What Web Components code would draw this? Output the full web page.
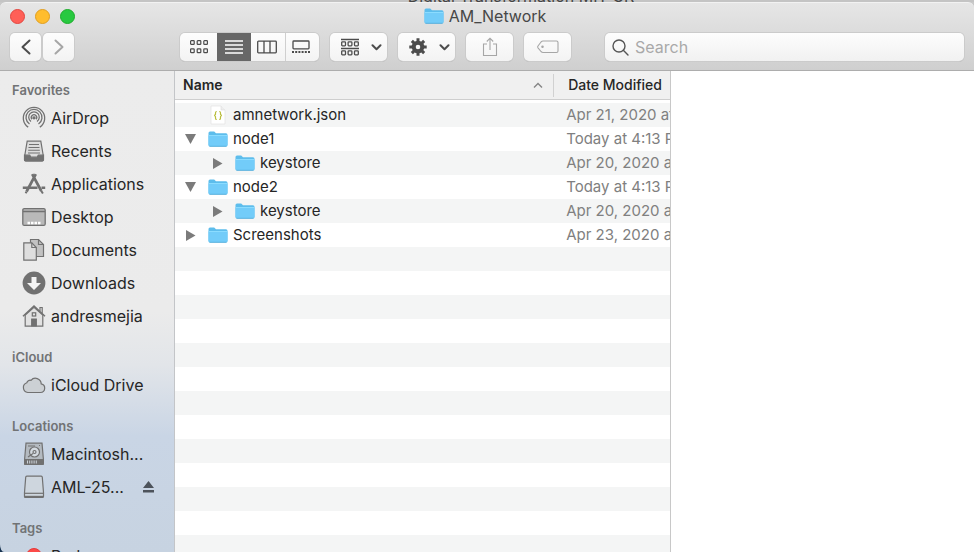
<!DOCTYPE html>
<html lang="en">
<head>
<meta charset="utf-8">
<title>AM_Network</title>
<style>
html,body{margin:0;height:100%}
body{font-family:Inter,"Liberation Sans",sans-serif;font-size:16px;color:#262626;overflow:hidden;background:#c9c9c9}
</style>
</head>
<body>
<finder-window></finder-window>
<script>
const FOLDER = `<svg width="20" height="16" viewBox="0 0 20 16"><path d="M.5 2Q.5.5 2 .5h4.200l1.800 1.700H18q1.500 0 1.500 1.500V14q0 1.500-1.500 1.500H2Q.5 15.500.5 14z" fill="#5dbdec"/><path d="M.5 4.500h19V13.500q0 1.500-1.500 1.500H2Q.5 15 .5 13.500z" fill="#72ccf9"/><path d="M1 4.500h18" stroke="#8bdcff"/><path d="M1.500 15.300h17" stroke="#4fabd9" stroke-width=".8"/></svg>`;
const S = (w,h,body,extra='') => `<svg width="${w}" height="${h}" viewBox="0 0 ${w} ${h}" fill="none" stroke="currentColor" ${extra}>${body}</svg>`;
const ICONS = {
  folder: FOLDER,
  back: S(12,16,'<path d="M9.500 1.500 2.500 8l7 6.500"/>','stroke-width="2" stroke-linecap="round" stroke-linejoin="round"'),
  forward: S(12,16,'<path d="m2.500 1.500 7 6.500-7 6.500"/>','stroke-width="2" stroke-linecap="round" stroke-linejoin="round"'),
  chevron: S(11,7,'<path d="M1.500 1.200 5.500 5.200l4-4"/>','stroke-width="2" stroke-linecap="round" stroke-linejoin="round"'),
  grid: S(18,14,'<rect x=".6" y=".6" width="3.600" height="3.800" rx=".7"/><rect x="7.200" y=".6" width="3.600" height="3.800" rx=".7"/><rect x="13.800" y=".6" width="3.600" height="3.800" rx=".7"/><rect x=".6" y="8.800" width="3.600" height="3.800" rx=".7"/><rect x="7.200" y="8.800" width="3.600" height="3.800" rx=".7"/><rect x="13.800" y="8.800" width="3.600" height="3.800" rx=".7"/>','stroke-width="1.200"'),
  list: S(18,14,'<path d="M0 1h18M0 5h18M0 9h18M0 13h18"/>','stroke-width="1.300"'),
  columns: S(20,14,'<rect x=".7" y="1.200" width="18.600" height="11.600" rx=".8"/><path d="M7 1v12M13 1v12"/>','stroke-width="1.300"'),
  gallery: S(18,14,'<rect x="1" y="1" width="16" height="7.800" rx=".8"/><path d="M0 12h18" stroke-width="2" stroke-dasharray="2 1.200"/>','stroke-width="1.300"'),
  group: S(18,18,'<path d="M0 1.500h18M0 10.500h18"/><rect x=".7" y="3.900" width="3.800" height="3.900" rx=".7"/><rect x="7.100" y="3.900" width="3.800" height="3.900" rx=".7"/><rect x="13.500" y="3.900" width="3.800" height="3.900" rx=".7"/><rect x=".7" y="12.900" width="3.800" height="3.900" rx=".7"/><rect x="7.100" y="12.900" width="3.800" height="3.900" rx=".7"/><rect x="13.500" y="12.900" width="3.800" height="3.900" rx=".7"/>','stroke-width="1.300"'),
  gear: S(18,18,'<circle cx="9" cy="9" r="4.300" stroke-width="4"/><g stroke-width="3"><path d="M9 .3v3.500M9 14.200v3.500M.3 9h3.500M14.200 9h3.500M2.850 2.850l2.500 2.500M12.650 12.650l2.500 2.500M2.850 15.150l2.500-2.500M12.650 5.350l2.500-2.500"/></g>'),
  share: S(16,20,'<path d="M5 7H1.500v11.500h13V7H11M8 13V1.500M4.800 4.500 8 1.200l3.200 3.300"/>','stroke-width="1.100"'),
  tag: S(22,14,'<path d="M6 1h13.500q1.500 0 1.500 1.500v8.500q0 1.500-1.500 1.500H6Q5 12.500 4 11.500L1 7.800q-.6-.9 0-1.800L4 2Q5 1 6 1z"/><circle cx="5.500" cy="6.800" r=".7" fill="currentColor"/>','stroke-width="1.100"'),
  search: S(17,17,'<circle cx="7" cy="7" r="6"/><path d="m11.300 11.300 4.700 4.700"/>','stroke-width="1.400" stroke-linecap="round"'),
  sort: S(10,7,'<path d="m1 5.500 4-4 4 4"/>','stroke-width="1.400"'),
  down: `<svg width="11" height="10" viewBox="0 0 11 10"><path d="M0 0h11L5.500 10z" fill="#7b7b7b"/></svg>`,
  right: `<svg width="11" height="11" viewBox="0 0 11 11"><path d="M1 0v11l9.500-5.500z" fill="#7b7b7b"/></svg>`,
  json: `<svg width="20" height="20" viewBox="0 0 20 20"><path d="M3 1h10l4 4v14H3z" fill="#fff" stroke="#e2e2e2" stroke-width=".7"/><path d="M13 1v4h4" fill="#eee" stroke="#ddd" stroke-width=".6"/><path d="M8.800 6.500q-1.300 0-1.300 1.200v1.500L6.600 10.500l.9 1.200v1.500q0 1.300 1.300 1.300M11.200 6.500q1.300 0 1.300 1.200v1.500l.9 1.300-.9 1.200v1.500q0 1.300-1.300 1.300" fill="none" stroke="#b9bd3c" stroke-width="1.200"/></svg>`,
  eject: `<svg width="11" height="12" viewBox="0 0 11 12"><path d="M5.500 0 11 7H0zM0 9h11v2.600H0z" fill="currentColor"/></svg>`,
  airdrop: S(24,24,'<path d="M6.200 21.100a10.700 10.700 0 1 1 11.600 0M7.500 18a8 8 0 1 1 9 0M9 15.500a5.300 5.300 0 1 1 6 0"/><path d="M10 13.300a2.700 2.700 0 1 1 4 0"/><circle cx="12" cy="11.800" r="1" fill="currentColor"/>','stroke-width="1.300"'),
  recents: S(24,24,'<path d="M5.200 2.200h13.600l2.400 14v4.600q0 1-1 1H3.800q-1 0-1-1v-4.600z" fill="#dcdcdc"/><path d="M2.500 16.200h5.200l1.200 2h6.200l1.200-2h5.200v4.600q0 1-1 1H3.500q-1 0-1-1z" fill="currentColor"/><path d="M7 5.500h10M6.500 8.500h11M6.200 11.300h11.600M6 14h12" stroke-width="1.100"/>','stroke-width="1.200"'),
  applications: S(24,24,'<path d="M10.200 2.200 19.300 19M13.800 2.200 4.600 19.500" stroke-width="2.700"/><path d="M.8 15.700h14.700M19.500 15.700h3.700" stroke-width="2.400"/><path d="m19.300 19 1.600 2.500M4.600 19.500l-1 1.700" stroke-width="2"/>'),
  desktop: S(24,24,'<rect x=".8" y="3.600" width="22.400" height="16.800" rx="1.500" fill="#b9b9b9"/><path d="M1 6.500h22"/><path d="M5.500 18h13" stroke="#fff" stroke-width="2.600" stroke-dasharray="2.500 1"/>','stroke-width="1.300"'),
  documents: S(24,24,'<path d="M8.500 1.500h8l5 5v12h-13z" fill="#c2c2c2"/><path d="M16.500 1.500v5h5"/><path d="M1.800 4.800h8l4.500 4.700v12.700H1.800z" fill="#dedede"/><path d="M9.800 4.800v4.700h4.500"/>','stroke-width="1.200"'),
  downloads: `<svg width="24" height="24" viewBox="0 0 24 24"><circle cx="12" cy="12" r="11.400" fill="currentColor"/><path d="M9.500 6h5v6H19l-7 7-7-7h4.500z" fill="#f4f4f4"/></svg>`,
  home: S(24,24,'<path d="M3.200 11v11.200h17.600V11L12 3.200z" fill="#e2e2e2"/><path d="M1 12.200 12 2l11 10.200" stroke-width="1.500"/><path d="M18 7V3.500h2.200v5.700" /><path d="M9.700 22v-7h4.600v7z" fill="currentColor"/><rect x="10.300" y="8.800" width="3.400" height="3.200"/>','stroke-width="1.200"'),
  cloud: S(24,24,'<path d="M5.800 19.500a5 5 0 0 1-1-9.700A3.400 3.400 0 0 1 9 7.300a5.800 5.800 0 0 1 10.200 3.500 4.400 4.400 0 0 1-.7 8.700z" fill="#ccd0d4"/>','stroke-width="1.200"'),
  disk: S(24,24,'<path d="M4 1.200h16l1.400 16V21.500q0 1-1 1H3.600q-1 0-1-1V17.200z" fill="#b4bac0"/><path d="M3 17.500h18v5H3z" fill="currentColor"/><circle cx="12.500" cy="10" r="5" fill="#d4dae0"/><circle cx="12.500" cy="10" r="1.500"/><path d="M6 4h7M6 15l5-3.500M17 3.500h1"/><path d="M5 20h11" stroke="#ccd3da" stroke-width="3" stroke-dasharray="1 1.200"/>','stroke-width="1.200"'),
  drive: S(24,24,'<path d="M4.800 1.200h14.400q1 0 1.100 1L21.500 17.500v4q0 1-1 1h-17q-1 0-1-1v-4L3.700 2.200q.1-1 1.100-1z" fill="#ced6de"/><path d="M3 18.300h18"/><path d="M3 21.700h18" stroke-width="1.800"/>','stroke-width="1.200"'),
  red: `<svg width="24" height="24" viewBox="0 0 24 24"><circle cx="12" cy="12" r="7.500" fill="#fc4a48" stroke="#e53b3a"/></svg>`
};

function define(name, html){
  customElements.define(name, class extends HTMLElement{
    connectedCallback(){
      if(this.shadowRoot) return;
      const root = this.attachShadow({mode:'open'});
      root.innerHTML = '<style>*{box-sizing:border-box}button{font:inherit;color:inherit}</style>' + (typeof html === 'function' ? html(this) : html);
    }
  });
}
const a = (el,n) => el.getAttribute(n) || '';

define('ui-icon', el => `<style>:host{display:inline-flex;flex:none}svg{display:block}</style>${ICONS[a(el,'name')]}`);

define('tool-button', el => `<style>
:host{display:block;flex:none}
button{width:100%;height:28px;display:flex;align-items:center;justify-content:center;gap:12px;border:0;border-radius:5px;padding:0;
background:linear-gradient(#fdfdfd,#f3f3f3);box-shadow:0 0 0 1px #cbcbcb,0 1px 0 0 #a9a9a9;color:#4c4c4c}
button:disabled{color:#a6a6a6}
:host(.wide) button{padding-left:6px}
</style><button aria-label="${a(el,'label')}" ${el.hasAttribute('off')?'disabled':''}><slot></slot></button>`);

define('view-switch', `<style>
:host{display:block;flex:none}
div{display:grid;grid-template-columns:37px 34px 34px 34px;height:28px;border-radius:5px;background:linear-gradient(#fdfdfd,#f3f3f3);box-shadow:0 0 0 1px #cbcbcb,0 1px 0 0 #a9a9a9}
button{border:0;background:none;padding:0;display:flex;align-items:center;justify-content:center;color:#4c4c4c}
button[aria-pressed=true]{background:#676767;color:#fff}
button:nth-child(3){padding-right:2px}
button:last-child{border-left:1px solid #cfcfcf;padding-right:4px}
</style><div role="group" aria-label="View">
<button aria-label="Icons" aria-pressed="false"><ui-icon name="grid"></ui-icon></button>
<button aria-label="List" aria-pressed="true"><ui-icon name="list"></ui-icon></button>
<button aria-label="Columns" aria-pressed="false"><ui-icon name="columns"></ui-icon></button>
<button aria-label="Gallery" aria-pressed="false"><ui-icon name="gallery"></ui-icon></button></div>`);

define('search-field', `<style>
:host{display:block;flex:1;min-width:0}
label{display:flex;align-items:center;height:28px;gap:6px;padding:0 7px;border-radius:5px;background:linear-gradient(#fdfdfd,#f1f1f1);box-shadow:0 0 0 1px #cbcbcb,0 1px 0 0 #a9a9a9;color:#555}
input{flex:1;min-width:0;border:0;padding:0;outline:0;background:none;font:inherit;color:#333;height:20px}
input::placeholder{color:#a9a9a9;opacity:1}
</style><label><ui-icon name="search"></ui-icon><input type="search" placeholder="Search" aria-label="Search"></label>`);

define('window-toolbar', `<style>
:host{display:block;height:69px;flex:none;background:linear-gradient(#e6e6e6,#cfcfcf);border-bottom:1px solid #adadad;border-top:1px solid #f2f2f2;border-radius:6px 6px 0 0;box-sizing:border-box}
.title{display:grid;grid-template-columns:1fr auto 1fr;align-items:center;height:26px;padding:0 14px 0 10px}
.lights{display:flex;gap:10px}
.lights button{width:15px;height:15px;border-radius:50%;padding:0;border:1px solid #e2463f;background:#ff5f57}
.lights button:nth-child(2){background:#ffbd2e;border-color:#e09e21}
.lights button:nth-child(3){background:#28c940;border-color:#1dad2b}
h1{margin:0;font-size:16px;line-height:20px;font-weight:400;color:#474747;display:flex;align-items:center;gap:5px}
.tools{display:flex;align-items:center;padding:4px 10px 0}
.nav{display:flex;gap:2px;margin-right:106px}
.nav tool-button{width:31px}
.more{display:flex;gap:11px;margin:0 34px 0 11px}
.wide{width:57px}
.mid{width:47px}
</style>
<div class="title"><div class="lights"><button aria-label="Close"></button><button aria-label="Minimize"></button><button aria-label="Zoom"></button></div>
<h1><ui-icon name="folder"></ui-icon>AM_Network</h1><span></span></div>
<div class="tools">
<div class="nav"><tool-button label="Back"><ui-icon name="back"></ui-icon></tool-button><tool-button label="Forward" off><ui-icon name="forward"></ui-icon></tool-button></div>
<view-switch></view-switch>
<div class="more">
<tool-button label="Group" class="wide"><ui-icon name="group"></ui-icon><ui-icon name="chevron"></ui-icon></tool-button>
<tool-button label="Action" class="wide"><ui-icon name="gear"></ui-icon><ui-icon name="chevron"></ui-icon></tool-button>
<tool-button label="Share" off class="mid"><ui-icon name="share"></ui-icon></tool-button>
<tool-button label="Edit Tags" off class="mid"><ui-icon name="tag"></ui-icon></tool-button>
</div>
<search-field></search-field></div>`);

define('side-section', el => `<style>
:host{display:block;margin-bottom:15px}
h2{margin:0 0 1px;padding-left:12px;font-size:13px;line-height:20px;font-weight:600;color:#717375}
</style><h2>${a(el,'label')}</h2><slot></slot>`);

define('side-item', el => `<style>
:host{display:block}
a{display:flex;align-items:center;height:33px;padding:0 20px 0 22px;gap:5px;color:inherit;text-decoration:none;line-height:20px;white-space:nowrap}
ui-icon{color:#717171}
.eject{margin-left:auto;color:#4d535b}
</style><a href="#"><ui-icon name="${a(el,'icon')}"></ui-icon><span><slot></slot></span>${el.hasAttribute('eject')?'<ui-icon class="eject" name="eject"></ui-icon>':''}</a>`);

define('finder-sidebar', `<style>
:host{display:block;box-sizing:border-box;width:175px;flex:none;overflow:hidden;border-right:1px solid #c3c5c8;padding-top:9px;border-bottom-left-radius:4px 8px;
background:linear-gradient(#ececec 0,#ebebeb 50%,#e2e5e9 61%,#c9d5e5 76%,#c7d3e1 100%)}
nav{display:block}
</style><nav aria-label="Sidebar">
<side-section label="Favorites">
<side-item icon="airdrop">AirDrop</side-item><side-item icon="recents">Recents</side-item><side-item icon="applications">Applications</side-item><side-item icon="desktop">Desktop</side-item><side-item icon="documents">Documents</side-item><side-item icon="downloads">Downloads</side-item><side-item icon="home">andresmejia</side-item>
</side-section>
<side-section label="iCloud"><side-item icon="cloud">iCloud Drive</side-item></side-section>
<side-section label="Locations"><side-item icon="disk">Macintosh...</side-item><side-item icon="drive" eject>AML-25...</side-item></side-section>
<side-section label="Tags"><side-item icon="red">Red</side-item></side-section>
</nav>`);

const FILES = [
  ['json','amnetwork.json','Apr 21, 2020 at 9:48 AM',0,''],
  ['folder','node1','Today at 4:13 PM',0,'down'],
  ['folder','keystore','Apr 20, 2020 at 6:02 PM',1,'right'],
  ['folder','node2','Today at 4:13 PM',0,'down'],
  ['folder','keystore','Apr 20, 2020 at 6:04 PM',1,'right'],
  ['folder','Screenshots','Apr 23, 2020 at 7:15 PM',0,'right']
];
define('file-list', () => `<style>
:host{display:block;box-sizing:border-box;min-width:0;overflow:hidden;border-right:1px solid #c8c8c8;
background:repeating-linear-gradient(#f4f5f5 0 24px,#fff 24px 48px) 0 32px}
table{border-collapse:separate;border-spacing:0;table-layout:fixed;width:100%}
th{height:29px;padding:0 0 0 8px;background:#f0f0f0;border-bottom:1px solid #cecece;text-align:left;font-size:14px;font-weight:500;line-height:20px;white-space:nowrap}
th:first-child{font-weight:600}
th>div{display:flex;align-items:center;justify-content:space-between;color:#262626}
th ui-icon{margin-right:10px;color:#858585}
.rule{display:flex;align-items:center}
.rule:after{content:"";width:1px;height:23px;background:#d1d1d1}
th+th{padding-left:14px}
.gap td{height:3px;padding:0;background:#fff}
td{height:24px;padding:0;line-height:20px;white-space:nowrap;overflow:hidden}
td+td{padding-left:12px;color:#808080;font-size:15px}
.file{display:flex;align-items:center;font-size:15px;padding-left:9px}
.file.in{padding-left:36px}
.toggle{width:13px;height:20px;margin-right:11px;padding:0;border:0;background:none;display:flex;align-items:center;justify-content:center}
.file>ui-icon{margin-right:5px}
</style><table><colgroup><col><col style="width:116px"></colgroup><thead><tr><th aria-sort="ascending"><div>Name<span class="rule"><ui-icon name="sort"></ui-icon></span></div></th><th>Date Modified</th></tr></thead>
<tbody><tr class="gap" aria-hidden="true"><td colspan="2"></td></tr>${FILES.map(([i,n,d,l,t])=>`<tr><td><div class="file${l?' in':''}">${t?`<button class="toggle" aria-label="Toggle ${n}" aria-expanded="${t==='down'}"><ui-icon name="${t}"></ui-icon></button>`:'<span class="toggle"></span>'}<ui-icon name="${i}"></ui-icon>${n}</div></td><td>${d}</td></tr>`).join('')}</tbody></table>`);

define('finder-window', `<style>
:host{display:flex;flex-direction:column;height:100vh;overflow:hidden}
.behind{height:2px;flex:none;background:#c4c4c4;overflow:hidden;display:flex;justify-content:center;align-items:flex-end;padding-left:68px;font-size:16px;line-height:12px;color:#444}
main{flex:1;min-height:0;display:flex;background:#16324f}
.content{flex:1;min-width:0;display:grid;grid-template-columns:621fr 379fr;background:#fff}
</style><div class="behind"><span>Digital Transformation MIT CR</span></div><window-toolbar></window-toolbar>
<main><finder-sidebar></finder-sidebar><div class="content"><file-list></file-list><section aria-label="Preview"></section></div></main>`);
</script>
</body>
</html>
